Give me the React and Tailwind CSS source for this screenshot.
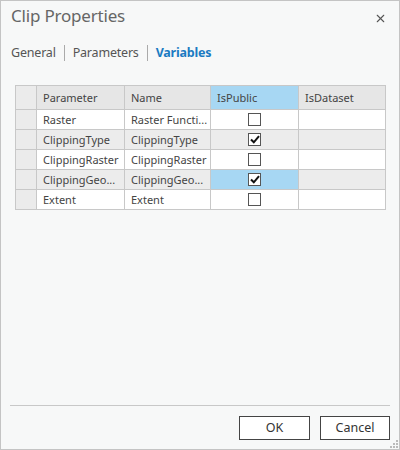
import { X } from "lucide-react";

const rows = [
  { param: "Raster", name: "Raster Functi...", checked: false },
  { param: "ClippingType", name: "ClippingType", checked: true },
  { param: "ClippingRaster", name: "ClippingRaster", checked: false },
  { param: "ClippingGeo...", name: "ClippingGeo...", checked: true, selected: true },
  { param: "Extent", name: "Extent", checked: false },
];

function CheckBox({ checked }) {
  return (
    <span className="inline-flex h-[13px] w-[13px] items-center justify-center border border-[#555] bg-white">
      {checked ? (
        <svg width="10" height="9" viewBox="0 0 10 9">
          <path d="M1 4.5 L3.8 7.3 L9 1.2" fill="none" stroke="#111" strokeWidth="2" />
        </svg>
      ) : null}
    </span>
  );
}

export default function App() {
  return (
    <div
      className="flex h-[450px] w-[400px] flex-col border border-[#c4c4c4] bg-[#f7f8f8] text-[#444]"
      style={{ fontFamily: '"Noto Sans", "Open Sans", sans-serif' }}
    >
      <div className="flex items-start justify-between pl-[10px] pr-[12px] pt-[3px]">
        <h1 className="text-[17px] font-normal leading-[24px] tracking-[-0.2px] text-[#666]">Clip Properties</h1>
        <X size={13} strokeWidth={2} className="mt-[8px] text-[#555]" />
      </div>

      <div className="mt-[16px] flex items-center pl-[10px] text-[12.5px] leading-[18px] tracking-[-0.2px]">
        <span className="text-[#555]">General</span>
        <span className="mx-[8px] h-[16px] w-px bg-[#aaa]" />
        <span className="text-[#555]">Parameters</span>
        <span className="mx-[8px] h-[16px] w-px bg-[#aaa]" />
        <span className="font-bold text-[#1b7bc2]">Variables</span>
      </div>

      <div className="ml-[14px] mt-[23px]">
        <table className="border-collapse text-[11px] leading-[18px] text-[#444]">
          <colgroup>
            <col className="w-[21px]" />
            <col className="w-[88px]" />
            <col className="w-[86px]" />
            <col className="w-[88px]" />
            <col className="w-[87px]" />
          </colgroup>
          <thead>
            <tr>
              <th className="h-[24px] border border-[#c8c8c8] bg-[#ebebeb] p-0" />
              <th className="h-[24px] border border-[#c8c8c8] bg-[#e6e6e6] p-0 pl-[6px] text-left font-normal">Parameter</th>
              <th className="h-[24px] border border-[#c8c8c8] bg-[#e6e6e6] p-0 pl-[6px] text-left font-normal">Name</th>
              <th className="h-[24px] border border-[#c8c8c8] bg-[#a7d7f3] p-0 pl-[6px] text-left font-normal">IsPublic</th>
              <th className="h-[24px] border border-[#c8c8c8] bg-[#e6e6e6] p-0 pl-[6px] text-left font-normal">IsDataset</th>
            </tr>
          </thead>
          <tbody>
            {rows.map((r, i) => {
              const bg = i % 2 === 1 ? "bg-[#ececec]" : "bg-white";
              return (
                <tr key={r.param}>
                  <td className="h-[20px] border border-[#c8c8c8] bg-[#ebebeb] p-0" />
                  <td className={`h-[20px] border border-[#c8c8c8] p-0 pl-[6px] ${bg}`}>{r.param}</td>
                  <td className={`h-[20px] border border-[#c8c8c8] p-0 pl-[6px] ${bg}`}>{r.name}</td>
                  <td className={`h-[20px] border border-[#c8c8c8] p-0 text-center ${r.selected ? "bg-[#a7d7f3]" : bg}`}>
                    <span className="flex items-center justify-center">
                      <CheckBox checked={r.checked} />
                    </span>
                  </td>
                  <td className={`h-[20px] border border-[#c8c8c8] p-0 ${bg}`} />
                </tr>
              );
            })}
          </tbody>
        </table>
      </div>

      <div className="flex-1" />

      <div className="mx-[9px] border-t border-[#c8c8c8]" />

      <div className="relative flex justify-end gap-[10px] pb-[9px] pr-[9px] pt-[10px]">
        <button className="h-[24px] w-[71px] border border-[#444] bg-white text-[12.5px] text-[#333]">OK</button>
        <button className="h-[24px] w-[70px] border border-[#444] bg-white text-[12.5px] text-[#333]">Cancel</button>
        <svg className="absolute bottom-[1px] right-[1px]" width="8" height="8" viewBox="0 0 8 8">
          <rect x="6" y="0" width="2" height="2" fill="#bbb" />
          <rect x="3" y="3" width="2" height="2" fill="#bbb" />
          <rect x="6" y="3" width="2" height="2" fill="#bbb" />
          <rect x="0" y="6" width="2" height="2" fill="#bbb" />
          <rect x="3" y="6" width="2" height="2" fill="#bbb" />
          <rect x="6" y="6" width="2" height="2" fill="#bbb" />
        </svg>
      </div>
    </div>
  );
}
